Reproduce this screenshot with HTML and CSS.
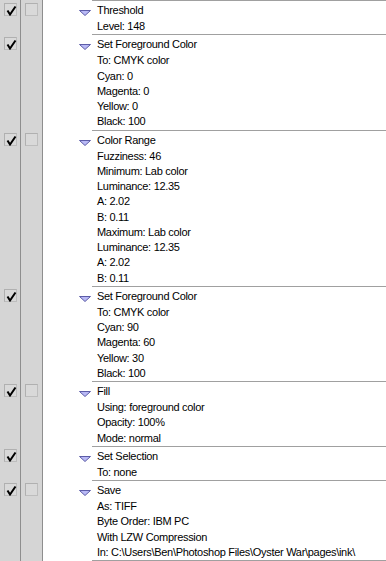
FILE: index.html
```html
<!DOCTYPE html>
<html>
<head>
<meta charset="utf-8">
<link rel="stylesheet" href="styles.css">
</head>
<body>
<div class="panel">

  <div class="group">
    <div class="c1"><span class="box"><svg class="check" width="11" height="11" viewBox="0 0 11 11"><path d="M1.5 5.5 L4 9.5 L9.5 1.5" fill="none" stroke="#000" stroke-width="2"/></svg></span></div>
    <div class="c2"><span class="box"></span></div>
    <div class="tri"><svg width="12" height="6" viewBox="0 0 12 6"><polygon points="0.5,0.5 11.5,0.5 6,5.5" fill="#b9b9f5" stroke="#5c5ca8" stroke-width="1"/></svg></div>
    <div class="body">
      <div class="title">Threshold</div>
      <div class="item">Level: 148</div>
    </div>
  </div>

  <div class="group">
    <div class="c1"><span class="box"><svg class="check" width="11" height="11" viewBox="0 0 11 11"><path d="M1.5 5.5 L4 9.5 L9.5 1.5" fill="none" stroke="#000" stroke-width="2"/></svg></span></div>
    <div class="c2"></div>
    <div class="tri"><svg width="12" height="6" viewBox="0 0 12 6"><polygon points="0.5,0.5 11.5,0.5 6,5.5" fill="#b9b9f5" stroke="#5c5ca8" stroke-width="1"/></svg></div>
    <div class="body">
      <div class="title">Set Foreground Color</div>
      <div class="item">To: CMYK color</div>
      <div class="item">Cyan: 0</div>
      <div class="item">Magenta: 0</div>
      <div class="item">Yellow: 0</div>
      <div class="item">Black: 100</div>
    </div>
  </div>

  <div class="group">
    <div class="c1"><span class="box"><svg class="check" width="11" height="11" viewBox="0 0 11 11"><path d="M1.5 5.5 L4 9.5 L9.5 1.5" fill="none" stroke="#000" stroke-width="2"/></svg></span></div>
    <div class="c2"><span class="box"></span></div>
    <div class="tri"><svg width="12" height="6" viewBox="0 0 12 6"><polygon points="0.5,0.5 11.5,0.5 6,5.5" fill="#b9b9f5" stroke="#5c5ca8" stroke-width="1"/></svg></div>
    <div class="body">
      <div class="title">Color Range</div>
      <div class="item">Fuzziness: 46</div>
      <div class="item">Minimum: Lab color</div>
      <div class="item">Luminance: 12.35</div>
      <div class="item">A: 2.02</div>
      <div class="item">B: 0.11</div>
      <div class="item">Maximum: Lab color</div>
      <div class="item">Luminance: 12.35</div>
      <div class="item">A: 2.02</div>
      <div class="item">B: 0.11</div>
    </div>
  </div>

  <div class="group">
    <div class="c1"><span class="box"><svg class="check" width="11" height="11" viewBox="0 0 11 11"><path d="M1.5 5.5 L4 9.5 L9.5 1.5" fill="none" stroke="#000" stroke-width="2"/></svg></span></div>
    <div class="c2"></div>
    <div class="tri"><svg width="12" height="6" viewBox="0 0 12 6"><polygon points="0.5,0.5 11.5,0.5 6,5.5" fill="#b9b9f5" stroke="#5c5ca8" stroke-width="1"/></svg></div>
    <div class="body">
      <div class="title">Set Foreground Color</div>
      <div class="item">To: CMYK color</div>
      <div class="item">Cyan: 90</div>
      <div class="item">Magenta: 60</div>
      <div class="item">Yellow: 30</div>
      <div class="item">Black: 100</div>
    </div>
  </div>

  <div class="group">
    <div class="c1"><span class="box"><svg class="check" width="11" height="11" viewBox="0 0 11 11"><path d="M1.5 5.5 L4 9.5 L9.5 1.5" fill="none" stroke="#000" stroke-width="2"/></svg></span></div>
    <div class="c2"><span class="box"></span></div>
    <div class="tri"><svg width="12" height="6" viewBox="0 0 12 6"><polygon points="0.5,0.5 11.5,0.5 6,5.5" fill="#b9b9f5" stroke="#5c5ca8" stroke-width="1"/></svg></div>
    <div class="body">
      <div class="title">Fill</div>
      <div class="item">Using: foreground color</div>
      <div class="item">Opacity: 100%</div>
      <div class="item">Mode: normal</div>
    </div>
  </div>

  <div class="group">
    <div class="c1"><span class="box"><svg class="check" width="11" height="11" viewBox="0 0 11 11"><path d="M1.5 5.5 L4 9.5 L9.5 1.5" fill="none" stroke="#000" stroke-width="2"/></svg></span></div>
    <div class="c2"></div>
    <div class="tri"><svg width="12" height="6" viewBox="0 0 12 6"><polygon points="0.5,0.5 11.5,0.5 6,5.5" fill="#b9b9f5" stroke="#5c5ca8" stroke-width="1"/></svg></div>
    <div class="body">
      <div class="title">Set Selection</div>
      <div class="item">To: none</div>
    </div>
  </div>

  <div class="group last">
    <div class="c1"><span class="box"><svg class="check" width="11" height="11" viewBox="0 0 11 11"><path d="M1.5 5.5 L4 9.5 L9.5 1.5" fill="none" stroke="#000" stroke-width="2"/></svg></span></div>
    <div class="c2"><span class="box"></span></div>
    <div class="tri"><svg width="12" height="6" viewBox="0 0 12 6"><polygon points="0.5,0.5 11.5,0.5 6,5.5" fill="#b9b9f5" stroke="#5c5ca8" stroke-width="1"/></svg></div>
    <div class="body">
      <div class="title">Save</div>
      <div class="item">As: TIFF</div>
      <div class="item">Byte Order: IBM PC</div>
      <div class="item">With LZW Compression</div>
      <div class="item">In: C:\Users\Ben\Photoshop Files\Oyster War\pages\ink\</div>
    </div>
  </div>

</div>
</body>
</html>
```

FILE: styles.css
```css
* { box-sizing: border-box; }
html, body { margin: 0; padding: 0; background: #fff; }
body {
  font-family: "Liberation Sans", Arial, sans-serif;
  font-size: 11px;
  letter-spacing: -0.3px;
  color: #000;
  overflow: hidden;
}
.panel {
  width: 386px;
  height: 561px;
  overflow: hidden;
  background: #fff;
}
.group {
  display: flex;
  align-items: stretch;
}
.c1 {
  width: 21px;
  background: #d5d5d5;
  border-right: 1px solid #8e8e8e;
  padding: 3px 0 0 4px;
}
.c2 {
  width: 22px;
  background: #d5d5d5;
  border-right: 1px solid #8e8e8e;
  padding: 3px 0 0 4px;
}
.box {
  display: block;
  width: 13px;
  height: 13px;
  border: 1px solid #bdbdbd;
  border-top-color: #b0b0b0;
  border-left-color: #b0b0b0;
  background: #d9d9d9;
  position: relative;
}
.check {
  position: absolute;
  left: 1px;
  top: 1px;
}
.tri {
  width: 49px;
  padding: 10px 0 0 36px;
  line-height: 0;
}
.body {
  flex: 1;
  border-top: 1px solid #a0a0a0;
  padding-left: 5px;
}
.group.last .body { border-bottom: 1px solid #a0a0a0; }
.title {
  height: 18px;
  padding-top: 2px;
  line-height: 15px;
}
.item {
  height: 15.25px;
  line-height: 15.25px;
  white-space: nowrap;
}
```
